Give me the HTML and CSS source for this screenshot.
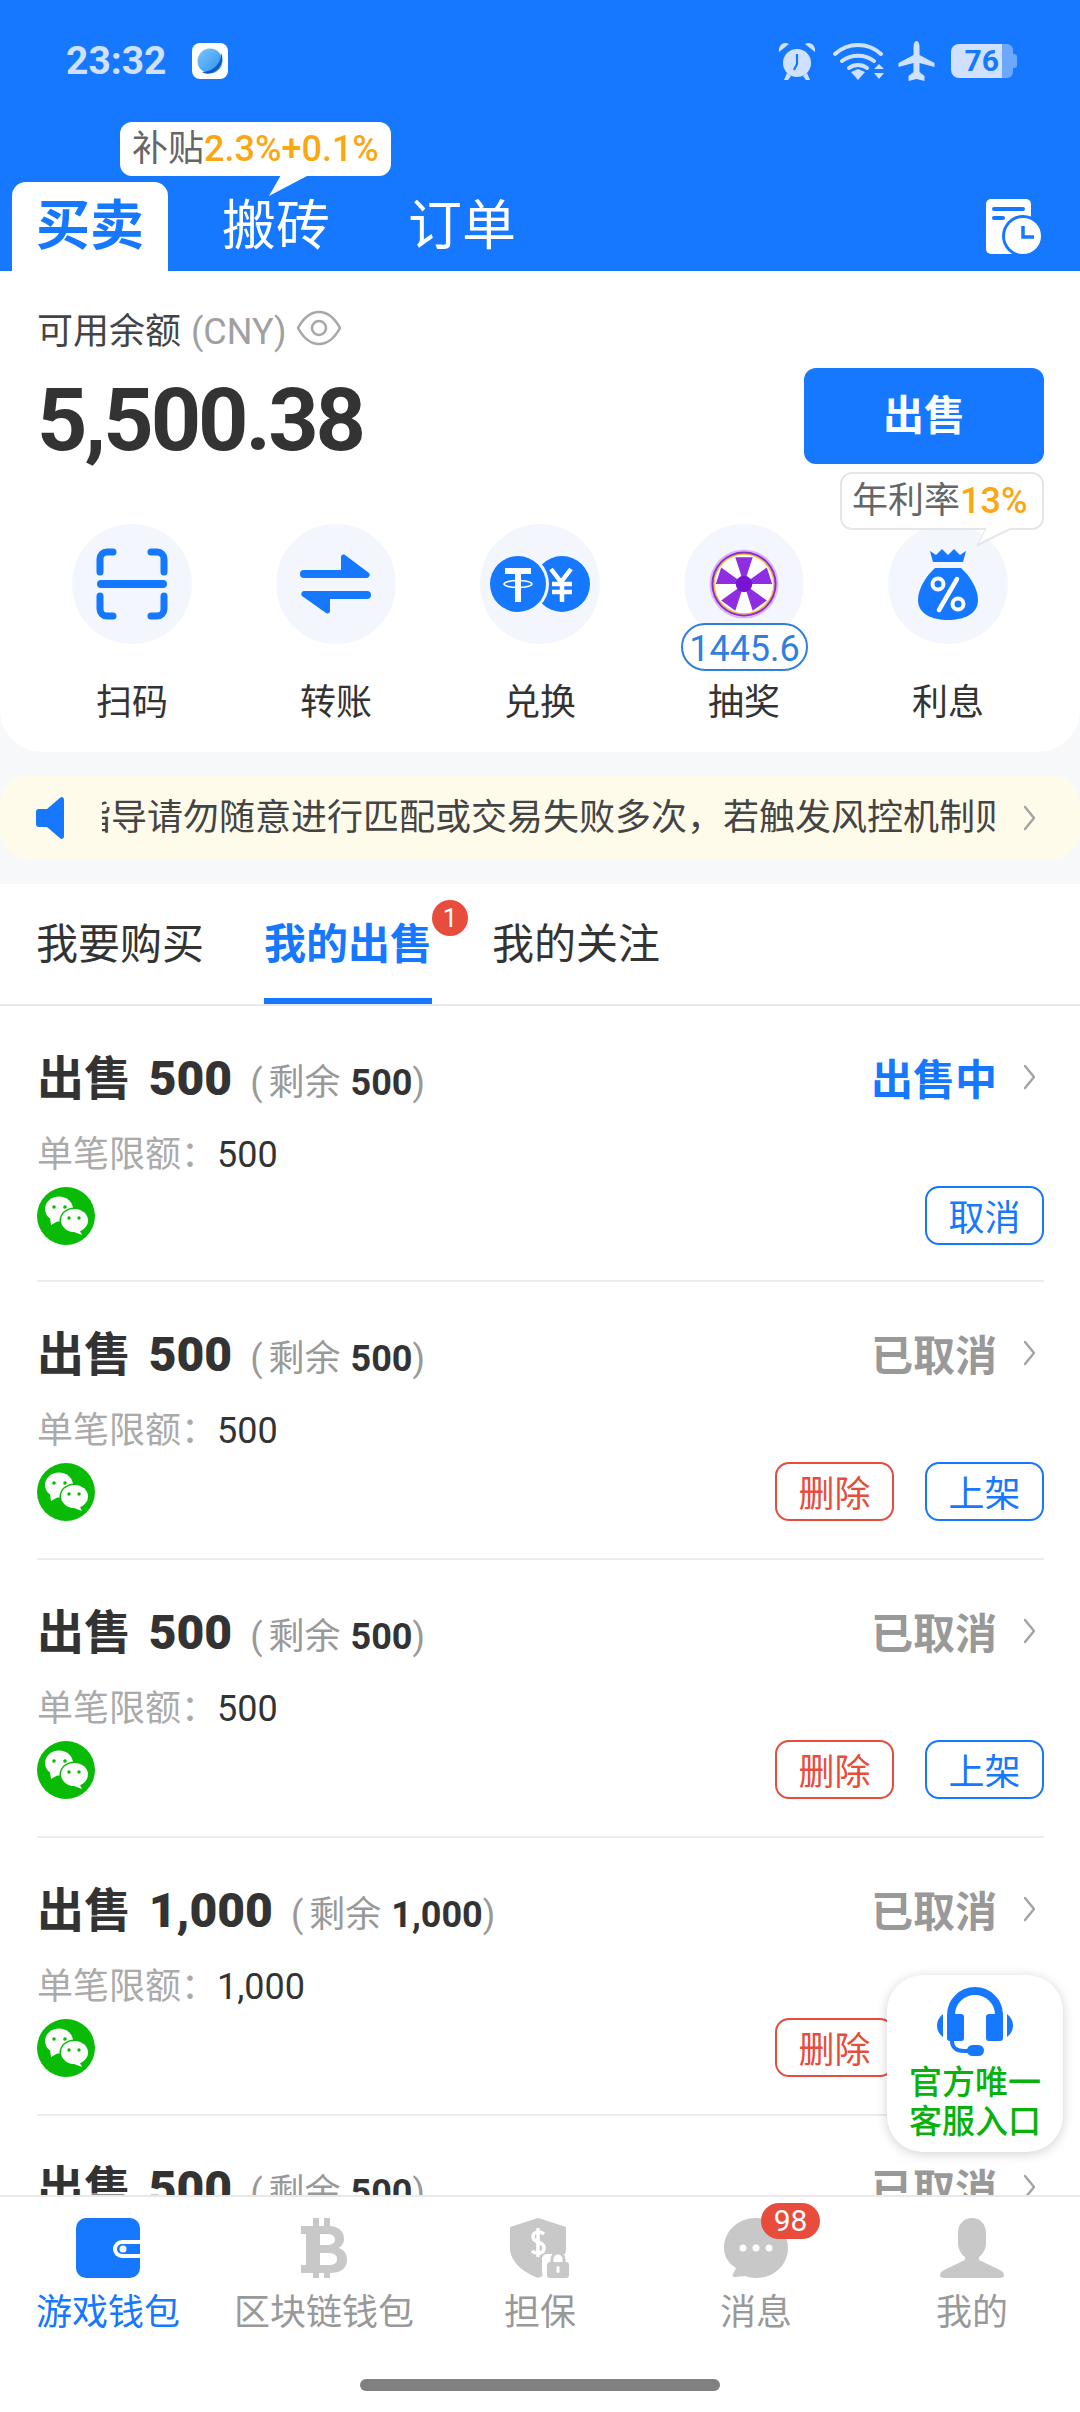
FILE: index.html
```html
<!DOCTYPE html>
<html lang="zh">
<head>
  <meta charset="UTF-8" />
  <meta name="viewport" content="width=device-width, initial-scale=1.0"/>
  <title>游戏钱包</title>
  <link rel="stylesheet" href="styles.css">
</head>
<body>
  <svg class="defs" width="0" height="0">
    <defs>
      <linearGradient id="planet" x1="0" y1="0" x2="1" y2="1">
        <stop offset="0" stop-color="#7cc6fb"/>
        <stop offset="1" stop-color="#2b8ff2"/>
      </linearGradient>
      <symbol id="wechat" viewBox="0 0 58 58">
        <circle cx="29" cy="29" r="29" fill="#09bb07"/>
        <ellipse cx="22" cy="22" rx="14" ry="12.500" fill="#fff"/>
        <path d="M13 31l1 7 7-4z" fill="#fff"/>
        <ellipse cx="37.500" cy="33.500" rx="15" ry="13" fill="#09bb07"/>
        <ellipse cx="37.500" cy="33.500" rx="13.500" ry="11.500" fill="#fff"/>
        <path d="M42 42l3 6-8-3z" fill="#fff"/>
        <circle cx="17" cy="20" r="1.800" fill="#09bb07"/>
        <circle cx="28" cy="20" r="1.800" fill="#09bb07"/>
        <circle cx="32" cy="31" r="1.700" fill="#09bb07"/>
        <circle cx="42" cy="31" r="1.700" fill="#09bb07"/>
      </symbol>
      <symbol id="chev" viewBox="0 0 14 26">
        <path d="M2 2l9 11-9 11" fill="none" stroke="#a3a3a3" stroke-width="2.400" stroke-linecap="round" stroke-linejoin="round"/>
      </symbol>
    </defs>
  </svg>

  <div class="phone">
    <header class="top">
      <div class="status">
        <div class="status-left">
          <span class="clock">23:32</span>
          <svg class="app-icon" viewBox="0 0 36 36">
            <rect width="36" height="36" rx="8" fill="#fff"/>
            <circle cx="18" cy="18" r="12.500" fill="url(#planet)"/>
            <path d="M29 10c1 9-7 19-19 19 3 2 6 2 9 1 8-2 14-12 10-20z" fill="#0f57c9"/>
          </svg>
        </div>
        <div class="status-right">
          <svg class="st-alarm" viewBox="0 0 38 40">
            <path d="M1 11C0 5 5 0 11 3zM37 11c1-6-4-11-10-8z" fill="#cfe1ff"/>
            <circle cx="19" cy="22" r="14" fill="#cfe1ff"/>
            <path d="M19 13v10l-3 6" fill="none" stroke="#1677ff" stroke-width="2.200"/>
            <path d="M9 32l-3 7h4l3-4zM29 32l3 7h-4l-3-4z" fill="#cfe1ff"/>
          </svg>
          <svg class="st-wifi" viewBox="0 0 52 38">
            <g fill="none" stroke="#cfe1ff" stroke-width="4" stroke-linecap="round">
              <path d="M2 12c13-12 33-12 46 0"/>
              <path d="M9 19c9-7 23-7 32 0"/>
              <path d="M16 26c5-4 13-4 18 0"/>
            </g>
            <path d="M18 30l7-3 7 3-7 8zM41 27l5-5 5 5zM41 31h10l-5 6z" fill="#cfe1ff"/>
          </svg>
          <svg class="st-plane" viewBox="0 0 37 41">
            <path d="M18.500 0c2 0 3 3 3 6v8l15 8v4l-15-4v9l5 4v5l-8-2-8 2v-5l5-4v-9L.500 26v-4l15-8V6c0-3 1-6 3-6z" fill="#cfe1ff"/>
          </svg>
          <div class="battery">
            <span class="battery-level">76</span>
            <span class="battery-rest"></span>
            <span class="battery-cap"></span>
          </div>
        </div>
      </div>

      <nav class="main-tabs">
        <a class="main-tab active">买卖</a>
        <a class="main-tab">搬砖</a>
        <a class="main-tab">订单</a>
        <svg class="history" viewBox="0 0 56 56">
          <path d="M5 0h35a5 5 0 0 1 5 5v50H5a5 5 0 0 1-5-5V5a5 5 0 0 1 5-5z" fill="#fff"/>
          <rect x="6" y="8" width="33" height="4" rx="2" fill="#1677ff"/>
          <rect x="6" y="17" width="13" height="4" rx="2" fill="#1677ff"/>
          <circle cx="37" cy="37" r="21" fill="#1677ff"/>
          <circle cx="37" cy="37" r="18" fill="#fff"/>
          <path d="M37 27v11h11" fill="none" stroke="#1677ff" stroke-width="3.500"/>
        </svg>
        <div class="bubble bubble-sub">补贴<em>2.3%+0.1%</em></div>
      </nav>
    </header>

    <section class="wallet">
      <div class="wallet-head">
        <div>
          <div class="balance-label">可用余额 <span>(CNY)</span>
            <svg class="eye" viewBox="0 0 46 36">
              <path d="M2 18C8 7 15 2 23 2s15 5 21 16c-6 11-13 16-21 16S8 29 2 18z" fill="none" stroke="#a8a8a8" stroke-width="2.600"/>
              <circle cx="23" cy="18" r="7" fill="none" stroke="#a8a8a8" stroke-width="2.600"/>
            </svg>
          </div>
          <div class="balance">5,500.38</div>
        </div>
        <a class="sell-btn">出售</a>
      </div>

      <div class="actions">
        <div class="action">
          <div class="action-circle">
            <svg class="ico" viewBox="0 0 72 72">
              <g fill="none" stroke="#1677ff" stroke-linecap="round">
                <path stroke-width="7" d="M4 24V11a7 7 0 0 1 7-7h6M55 4h6a7 7 0 0 1 7 7v13M4 48v13a7 7 0 0 0 7 7h6M55 68h6a7 7 0 0 0 7-7V48"/>
                <path stroke-width="8" d="M5 36h62"/>
              </g>
            </svg>
          </div>
          <span>扫码</span>
        </div>
        <div class="action">
          <div class="action-circle">
            <svg class="ico-arrows" viewBox="0 0 72 60">
              <path d="M4 24h63a3 3 0 0 0 2-5L45 1c-2-1-4 0-4 2v13H4a4 4 0 0 0 0 8z" fill="#1677ff"/>
              <path d="M67 37H4a3 3 0 0 0-2 5l24 17c2 1 4 0 4-2V45h37a4 4 0 0 0 0-8z" fill="#1677ff"/>
            </svg>
          </div>
          <span>转账</span>
        </div>
        <div class="action">
          <div class="action-circle">
            <svg class="ico-wide" viewBox="0 0 100 56">
              <circle cx="72" cy="28" r="28" fill="#1677ff"/>
              <circle cx="28" cy="28" r="31" fill="#f3f7fd"/>
              <circle cx="28" cy="28" r="28" fill="#1677ff"/>
              <path d="M15 12h26v6H31v28h-6V18H15z" fill="#fff"/>
              <ellipse cx="28" cy="28" rx="14" ry="3.500" fill="none" stroke="#fff" stroke-width="1.500"/>
              <path d="M61 13l10 13 10-13M62 28h20M62 36h20M72 26v20" fill="none" stroke="#fff" stroke-width="4.500"/>
            </svg>
          </div>
          <span>兑换</span>
        </div>
        <div class="action">
          <div class="action-circle">
            <svg class="wheel" viewBox="0 0 72 72">
              <circle cx="36" cy="36" r="35.500" fill="#d9b8f2"/>
              <circle cx="36" cy="36" r="33.500" fill="#8a2be0"/>
              <circle cx="36" cy="36" r="31.500" fill="#f7b93a"/>
              <circle cx="36" cy="36" r="30" fill="#fff"/>
              <path d="M36 36L27.040 8.420 44.960 8.420zM36 36L59.460 18.950 65 36zM36 36L59.460 53.050 44.960 63.580zM36 36L27.040 63.580 12.540 53.050zM36 36L7 36 12.540 18.950z" fill="#8f2de2"/>
              <circle cx="36" cy="36" r="8.500" fill="#7a12d4"/>
            </svg>
            <span class="lottery-pill">1445.6</span>
          </div>
          <span>抽奖</span>
        </div>
        <div class="action">
          <div class="action-circle">
            <svg class="bag" viewBox="0 0 60 72">
              <path d="M12 3l6 4 6-6 6 6 6-6 6 6 6-4-3 11H15z" fill="#1677ff"/>
              <path d="M17 20h26c8 7 17 20 17 32 0 14-14 20-30 20S0 66 0 52c0-12 9-25 17-32z" fill="#1677ff"/>
              <path d="M39 31L21 62" stroke="#fff" stroke-width="4.500" stroke-linecap="round"/>
              <circle cx="20" cy="36" r="5.500" fill="none" stroke="#fff" stroke-width="4"/>
              <circle cx="40" cy="56" r="5.500" fill="none" stroke="#fff" stroke-width="4"/>
            </svg>
          </div>
          <span>利息</span>
        </div>
        <div class="bubble bubble-rate">年利率<em>13%</em></div>
      </div>
    </section>

    <div class="notice">
      <svg class="speaker" viewBox="0 0 28 42">
        <path d="M25 0c2 0 3 1 3 3v36c0 2-1 3-3 3L11 30H3a3 3 0 0 1-3-3V15a3 3 0 0 1 3-3h8z" fill="#1677ff"/>
      </svg>
      <div class="notice-text"><p>指导请勿随意进行匹配或交易失败多次，若触发风控机制则</p></div>
      <svg class="chev" viewBox="0 0 14 26"><use href="#chev"/></svg>
    </div>

    <nav class="sub-tabs">
      <a class="sub-tab">我要购买</a>
      <a class="sub-tab active">我的出售<i class="dot-badge">1</i></a>
      <a class="sub-tab">我的关注</a>
    </nav>

    <main class="orders">
      <div class="order">
        <div class="order-top">
          <h3>出售 <b>500</b><span class="left">(<i>剩余</i><strong>500</strong>)</span></h3>
          <div class="state selling">出售中</div>
          <svg class="chev" viewBox="0 0 14 26"><use href="#chev"/></svg>
        </div>
        <div class="limit">单笔限额：<span>500</span></div>
        <div class="order-foot">
          <svg class="wx" viewBox="0 0 58 58"><use href="#wechat"/></svg>
          <a class="btn">取消</a>
        </div>
      </div>

      <div class="order">
        <div class="order-top">
          <h3>出售 <b>500</b><span class="left">(<i>剩余</i><strong>500</strong>)</span></h3>
          <div class="state">已取消</div>
          <svg class="chev" viewBox="0 0 14 26"><use href="#chev"/></svg>
        </div>
        <div class="limit">单笔限额：<span>500</span></div>
        <div class="order-foot">
          <svg class="wx" viewBox="0 0 58 58"><use href="#wechat"/></svg>
          <a class="btn red">删除</a>
          <a class="btn">上架</a>
        </div>
      </div>

      <div class="order">
        <div class="order-top">
          <h3>出售 <b>500</b><span class="left">(<i>剩余</i><strong>500</strong>)</span></h3>
          <div class="state">已取消</div>
          <svg class="chev" viewBox="0 0 14 26"><use href="#chev"/></svg>
        </div>
        <div class="limit">单笔限额：<span>500</span></div>
        <div class="order-foot">
          <svg class="wx" viewBox="0 0 58 58"><use href="#wechat"/></svg>
          <a class="btn red">删除</a>
          <a class="btn">上架</a>
        </div>
      </div>

      <div class="order">
        <div class="order-top">
          <h3>出售 <b>1,000</b><span class="left">(<i>剩余</i><strong>1,000</strong>)</span></h3>
          <div class="state">已取消</div>
          <svg class="chev" viewBox="0 0 14 26"><use href="#chev"/></svg>
        </div>
        <div class="limit">单笔限额：<span>1,000</span></div>
        <div class="order-foot">
          <svg class="wx" viewBox="0 0 58 58"><use href="#wechat"/></svg>
          <a class="btn red">删除</a>
          <a class="btn">上架</a>
        </div>
      </div>

      <div class="order">
        <div class="order-top">
          <h3>出售 <b>500</b><span class="left">(<i>剩余</i><strong>500</strong>)</span></h3>
          <div class="state">已取消</div>
          <svg class="chev" viewBox="0 0 14 26"><use href="#chev"/></svg>
        </div>
      </div>
    </main>

    <footer class="bottom">
      <div class="bottom-nav">
        <a class="nav-item active">
          <svg class="nav-ico" viewBox="0 0 64 60">
            <rect width="64" height="60" rx="10" fill="#1677ff"/>
            <path d="M64 22H46a9 9 0 0 0 0 18h18z" fill="#fff"/>
            <path d="M64 26H46a5 5 0 0 0 0 10h18z" fill="#1677ff"/>
            <circle cx="47" cy="31" r="3.500" fill="#fff"/>
          </svg>
          <span>游戏钱包</span>
        </a>
        <a class="nav-item">
          <svg class="nav-ico" viewBox="0 0 64 60">
            <path transform="translate(3 -2)" d="M18 2h6v8h5V2h6v8c9 1 14 5 14 13 0 5-3 8-6 9 6 1 9 6 9 12 0 9-7 13-17 13v5h-6v-5h-5v5h-6v-5H6v-8h5V18H6v-8h12zm7 16v11h6c6 0 9-2 9-5.500S37 18 31 18zm0 19v12h8c6 0 9-2 9-6s-3-6-9-6z" fill="#c8c8c8" fill-rule="evenodd"/>
          </svg>
          <span>区块链钱包</span>
        </a>
        <a class="nav-item">
          <svg class="nav-ico" viewBox="0 0 64 60">
            <path d="M30 0l28 9v21c0 13-12 24-28 30C14 54 2 43 2 30V9z" fill="#c8c8c8"/>
            <path d="M36 16c-3-3-11-3-11 3 0 6 11 4 11 11s-9 6-12 3M30 10v29" fill="none" stroke="#fff" stroke-width="3.500"/>
            <rect x="34" y="36" width="30" height="24" rx="5" fill="#fff"/>
            <rect x="39" y="44" width="22" height="16" rx="3" fill="#c8c8c8"/>
            <path d="M44 44v-3a6 6 0 0 1 12 0v3" fill="none" stroke="#c8c8c8" stroke-width="3"/>
            <rect x="48.500" y="48" width="3" height="7" rx="1.500" fill="#fff"/>
          </svg>
          <span>担保</span>
        </a>
        <a class="nav-item">
          <svg class="nav-ico" viewBox="0 0 64 60">
            <path d="M32 0c18 0 32 13 32 30S50 60 32 60c-4 0-8-.7-11-2l-10 1c-2 0-3-2-2-3l3-6C4 45 0 38 0 30 0 13 14 0 32 0z" fill="#c8c8c8"/>
            <circle cx="19" cy="30" r="3.500" fill="#fff"/>
            <circle cx="32" cy="30" r="3.500" fill="#fff"/>
            <circle cx="45" cy="30" r="3.500" fill="#fff"/>
          </svg>
          <i class="nav-badge">98</i>
          <span>消息</span>
        </a>
        <a class="nav-item">
          <svg class="nav-ico" viewBox="0 0 64 60">
            <path d="M32 0c8 0 14 6 14 15v10c0 6-3 11-7 14v3l21 10c3 2 4 3 4 5 0 2-2 3-4 3H4c-2 0-4-1-4-3 0-2 1-3 4-5l21-10v-3c-4-3-7-8-7-14V15C18 6 24 0 32 0z" fill="#c8c8c8"/>
          </svg>
          <span>我的</span>
        </a>
      </div>
      <div class="home-bar"></div>
    </footer>

    <div class="service">
      <svg class="headset" viewBox="0 0 76 70">
        <path d="M14 32v-4a24 24 0 0 1 48 0v4" fill="none" stroke="#1677ff" stroke-width="8"/>
        <rect x="10" y="27" width="17" height="27" rx="3" fill="#1677ff"/>
        <rect x="49" y="27" width="17" height="27" rx="3" fill="#1677ff"/>
        <path d="M6 27v23C2 47 0 43 0 38.500S2 30 6 27zM70 27v23c4-3 6-7 6-11.500S74 30 70 27z" fill="#1677ff"/>
        <path d="M15 54c0 6 4 10 12 10h8" fill="none" stroke="#1677ff" stroke-width="4"/>
        <rect x="30" y="58" width="17" height="11" rx="5.500" fill="#1677ff"/>
      </svg>
      <div class="service-text">官方唯一<br>客服入口</div>
    </div>
  </div>
</body>
</html>
```

FILE: styles.css
```css
:root {
  --blue: #1677ff;
  --red: #e74c3c;
  --orange: #fba714;
  --text: #333;
  --gray: #999;
}

* {
  box-sizing: border-box;
}

body, html {
  margin: 0;
  padding: 0;
  height: 100%;
  font-family: Roboto, 'Noto Sans CJK SC', sans-serif;
  color: var(--text);
  background: #f7f8fa;
  overflow: hidden;
}

em, i {
  font-style: normal;
}

.defs {
  position: absolute;
}

.phone {
  position: relative;
  width: 1080px;
  height: 2412px;
  display: flex;
  flex-direction: column;
  overflow: hidden;
}

/* top blue part */
.top {
  height: 271px;
  background: var(--blue);
  display: flex;
  flex-direction: column;
  flex-shrink: 0;
}

.status {
  height: 122px;
  padding: 36px 63px 0 66px;
  display: flex;
  justify-content: space-between;
}

.status-left {
  display: flex;
  align-items: center;
  height: 50px;
  gap: 25px;
}

.clock {
  font-size: 39px;
  font-weight: 700;
  color: #cfe1ff;
  line-height: 50px;
}

.app-icon {
  width: 36px;
  height: 36px;
}

.status-right {
  display: flex;
  align-items: center;
  height: 50px;
}

.st-alarm {
  width: 38px;
  height: 40px;
  margin-right: 17px;
}

.st-wifi {
  width: 52px;
  height: 38px;
  margin-right: 13px;
}

.st-plane {
  width: 37px;
  height: 41px;
  margin-right: 16px;
}

.battery {
  position: relative;
  display: flex;
  width: 66px;
  height: 34px;
}

.battery-level {
  width: 51px;
  background: #cfe1ff;
  color: var(--blue);
  font-size: 30px;
  font-weight: 700;
  line-height: 34px;
  text-align: right;
  padding-right: 3px;
  border-radius: 8px 0 0 8px;
}

.battery-rest {
  width: 11px;
  background: #6da8ff;
  border-radius: 0 6px 6px 0;
}

.battery-cap {
  width: 4px;
  height: 14px;
  margin-top: 10px;
  background: #6da8ff;
  border-radius: 0 3px 3px 0;
}

.main-tabs {
  position: relative;
  flex: 1;
  display: flex;
  align-items: flex-end;
  padding-left: 12px;
}

.main-tab {
  width: 156px;
  height: 89px;
  line-height: 90px;
  font-size: 54px;
  color: #fff;
  text-align: center;
  margin-right: 30px;
}

.main-tab.active {
  background: #fff;
  color: var(--blue);
  font-weight: 700;
  border-radius: 14px 14px 0 0;
  margin-right: 30px;
}

.history {
  width: 56px;
  height: 56px;
  margin-left: auto;
  margin-right: 38px;
  margin-bottom: 16px;
}

.bubble {
  position: absolute;
  background: #fff;
  color: #666;
  font-size: 36px;
  white-space: nowrap;
  border-radius: 12px;
  line-height: 1;
}

.bubble em {
  color: var(--orange);
  font-weight: 500;
}

.bubble::after {
  content: '';
  position: absolute;
  width: 38px;
  height: 20px;
  top: 100%;
  background: inherit;
  clip-path: polygon(30% 0, 100% 0, 0 100%);
}

.bubble-sub {
  left: 120px;
  top: 0;
  width: 271px;
  height: 54px;
  padding: 9px 0 0 12px;
}

.bubble-sub::after {
  left: 149px;
}

.bubble-rate {
  left: 810px;
  top: -52px;
  width: 204px;
  height: 58px;
  border: 2px solid #e4e6e8;
  padding: 9px 0 0 10px;
}

.bubble-rate::before {
  content: '';
  position: absolute;
  left: 134px;
  top: 54px;
  width: 38px;
  height: 19px;
  background: #e4e6e8;
  clip-path: polygon(25% 0, 100% 0, 0 100%);
}

.bubble-rate::after {
  left: 137px;
  top: 53px;
  width: 33px;
  height: 16px;
  clip-path: polygon(25% 0, 100% 0, 0 100%);
}

/* wallet card */
.wallet {
  height: 481px;
  background: #fff;
  border-radius: 0 0 42px 42px;
  padding: 41px 36px 0 37px;
  flex-shrink: 0;
}

.wallet-head {
  display: flex;
  justify-content: space-between;
  height: 212px;
}

.balance-label {
  font-size: 36px;
  line-height: 40px;
  color: #444;
  display: flex;
  align-items: center;
  gap: 10px;
}

.balance-label span {
  color: #a0a0a0;
}

.eye {
  width: 46px;
  height: 36px;
  margin-top: -8px;
}

.balance {
  font-size: 88px;
  font-weight: 700;
  letter-spacing: -3px;
  line-height: 100px;
  margin-top: 18px;
  color: #333;
}

.sell-btn {
  width: 240px;
  height: 96px;
  margin-top: 56px;
  background: var(--blue);
  color: #fff;
  font-size: 41px;
  font-weight: 700;
  line-height: 96px;
  text-align: center;
  border-radius: 12px;
}

.actions {
  position: relative;
  display: grid;
  grid-template-columns: repeat(5, 204px);
  margin-left: -7px;
}

.action {
  display: flex;
  flex-direction: column;
  align-items: center;
  font-size: 36px;
  line-height: 40px;
  color: #333;
  gap: 39px;
}

.action-circle {
  position: relative;
  width: 120px;
  height: 120px;
  border-radius: 50%;
  background: #f3f7fd;
  display: flex;
  align-items: center;
  justify-content: center;
}

.ico {
  width: 72px;
  height: 72px;
}

.ico-arrows {
  width: 72px;
  height: 60px;
}

.ico-wide {
  width: 100px;
  height: 56px;
}

.wheel {
  width: 70px;
  height: 70px;
}

.bag {
  width: 60px;
  height: 72px;
}

.lottery-pill {
  position: absolute;
  left: -3px;
  top: 99px;
  width: 127px;
  height: 48px;
  background: #fff;
  border: 2px solid #2f7fe0;
  border-radius: 24px;
  color: #2f7fe0;
  font-size: 36px;
  line-height: 48px;
  text-align: center;
}

/* notice */
.notice {
  height: 85px;
  margin-top: 23px;
  background: #fffbeb;
  border-radius: 30px;
  display: flex;
  align-items: center;
  padding: 0 43px 0 36px;
  flex-shrink: 0;
}

.speaker {
  width: 28px;
  height: 42px;
  margin-right: 38px;
}

.notice-text {
  width: 895px;
  overflow: hidden;
  font-size: 36px;
  line-height: 44px;
  color: #444;
  white-space: nowrap;
}

.notice-text p {
  margin: 0 0 0 -27px;
}

.chev {
  width: 14px;
  height: 26px;
  flex-shrink: 0;
}

.notice .chev {
  margin-left: 26px;
}

/* sub tabs */
.sub-tabs {
  height: 122px;
  margin-top: 24px;
  background: #fff;
  border-bottom: 2px solid #e9e9e9;
  display: flex;
  padding-left: 36px;
  gap: 60px;
  flex-shrink: 0;
}

.sub-tab {
  position: relative;
  font-size: 42px;
  line-height: 121px;
  color: #333;
  height: 120px;
}

.sub-tab.active {
  color: var(--blue);
  font-weight: 700;
  border-bottom: 6px solid var(--blue);
}

.dot-badge {
  position: absolute;
  left: 168px;
  top: 16px;
  width: 36px;
  height: 36px;
  border-radius: 50%;
  background: var(--red);
  color: #fff;
  font-size: 26px;
  font-weight: 400;
  line-height: 36px;
  text-align: center;
}

/* order list */
.orders {
  flex: 1;
  background: #fff;
  overflow: hidden;
  padding: 0 36px 0 37px;
}

.order {
  height: 278px;
  padding-top: 47px;
  border-bottom: 2px solid #ececec;
}

.order:first-child {
  height: 276px;
}

.order-top {
  display: flex;
  align-items: center;
  height: 56px;
}

.order-top h3 {
  margin: 0;
  flex: 1;
  font-size: 47px;
  font-weight: 700;
  line-height: 56px;
  color: #333;
  white-space: nowrap;
}

.order-top h3 b {
  font-size: 48px;
  margin-left: 6px;
}

.left {
  font-size: 36px;
  font-weight: 400;
  color: var(--gray);
  margin-left: 18px;
}

.left i {
  margin: 0 10px 0 6px;
}

.left strong {
  color: var(--text);
  font-weight: 700;
}

.state {
  font-size: 42px;
  font-weight: 700;
  color: var(--gray);
  margin-bottom: 10px;
}

.state.selling {
  color: var(--blue);
}

.order-top .chev {
  margin: 0 7px 8px 26px;
}

.limit {
  margin-top: 24px;
  font-size: 36px;
  line-height: 44px;
  color: #aaa;
}

.limit span {
  color: #333;
}

.order-foot {
  display: flex;
  align-items: center;
  gap: 31px;
  margin-top: 9px;
}

.wx {
  width: 58px;
  height: 58px;
  margin-right: auto;
}

.btn {
  width: 119px;
  height: 59px;
  border: 2px solid var(--blue);
  border-radius: 14px;
  color: var(--blue);
  font-size: 36px;
  line-height: 62px;
  text-align: center;
}

.btn.red {
  border-color: var(--red);
  color: var(--red);
}

/* bottom nav */
.bottom {
  height: 217px;
  background: #fff;
  border-top: 2px solid #e9e9e9;
  flex-shrink: 0;
  position: relative;
}

.bottom-nav {
  display: grid;
  grid-template-columns: repeat(5, 216px);
  padding-top: 21px;
}

.nav-item {
  position: relative;
  display: flex;
  flex-direction: column;
  align-items: center;
  font-size: 36px;
  line-height: 44px;
  color: #999;
  gap: 13px;
}

.nav-item.active {
  color: var(--blue);
}

.nav-ico {
  width: 64px;
  height: 60px;
}

.nav-badge {
  position: absolute;
  left: 113px;
  top: -15px;
  width: 59px;
  height: 36px;
  border-radius: 18px;
  background: var(--red);
  color: #fff;
  font-size: 30px;
  line-height: 36px;
  text-align: center;
}

.home-bar {
  position: absolute;
  left: 360px;
  top: 182px;
  width: 360px;
  height: 12px;
  background: #808080;
  border-radius: 6px;
}

/* floating service button */
.service {
  position: absolute;
  left: 887px;
  top: 1975px;
  width: 176px;
  height: 177px;
  background: #fff;
  border-radius: 36px;
  box-shadow: 0 2px 12px rgba(0, 0, 0, 0.18);
  display: flex;
  flex-direction: column;
  align-items: center;
  padding-top: 12px;
}

.headset {
  width: 76px;
  height: 70px;
}

.service-text {
  margin-top: 6px;
  font-size: 33px;
  font-weight: 500;
  line-height: 39px;
  color: #09b10f;
  text-align: center;
}
```
